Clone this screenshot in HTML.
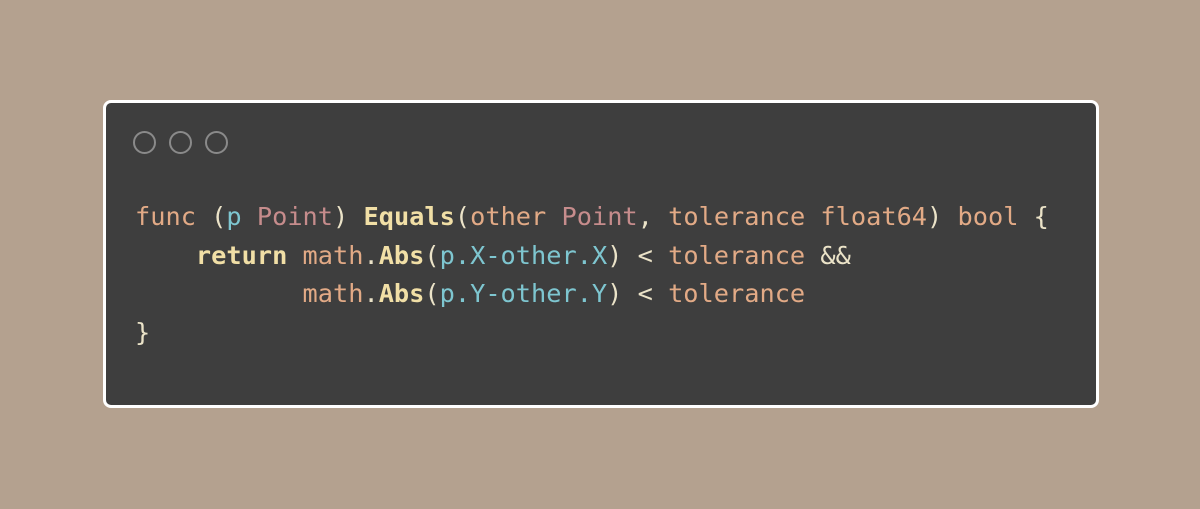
<!DOCTYPE html>
<html><head><style>
html,body{margin:0;padding:0}
body{width:1200px;height:509px;background:#b4a18f;position:relative;overflow:hidden}
.card{position:absolute;left:103px;top:100px;width:990px;height:302px;background:#3e3e3e;border:3px solid #fff;border-radius:8px}
.dot{position:absolute;top:28px;width:19px;height:19px;border:2px solid #8a8a8a;border-radius:50%}
pre{position:absolute;left:29px;top:95px;margin:0;font-family:"DejaVu Sans Mono","Liberation Mono",monospace;font-size:25.3px;line-height:38.5px;color:#ebe3c8}
.k{color:#e2aa86}.c{color:#7ec6d0}.t{color:#c68c8c}.f{color:#f1dfa6;font-weight:bold}.p{color:#ebe3c8}
</style></head><body>
<div class="card">
<div class="dot" style="left:27px"></div><div class="dot" style="left:63px"></div><div class="dot" style="left:99px"></div>
<pre><span class="k">func</span> (<span class="c">p</span> <span class="t">Point</span>) <span class="f">Equals</span>(<span class="k">other</span> <span class="t">Point</span>, <span class="k">tolerance float64</span>) <span class="k">bool</span> {
    <span class="f">return</span> <span class="k">math</span>.<span class="f">Abs</span>(<span class="c">p.X-other.X</span>) &lt; <span class="k">tolerance</span> &amp;&amp;
           <span class="k">math</span>.<span class="f">Abs</span>(<span class="c">p.Y-other.Y</span>) &lt; <span class="k">tolerance</span>
}</pre>
</div>
</body></html>
